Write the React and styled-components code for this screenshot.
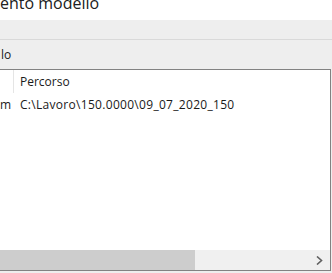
import React from "react";
import styled, { createGlobalStyle } from "styled-components";

const Global = createGlobalStyle`
  html, body { margin: 0; padding: 0; background: #eeeeee; }
  body { font-family: "Open Sans", "Noto Sans", "Liberation Sans", sans-serif; }
`;

const Page = styled.div`
  width: 332px;
  height: 273px;
  display: flex;
  flex-direction: column;
  overflow: hidden;
  background: #eeeeee;
`;

const TitleBar = styled.div`
  height: 20px;
  background: #ffffff;
  overflow: hidden;
  display: flex;
  align-items: flex-end;
`;

const Title = styled.div`
  font-size: 16px;
  line-height: 22px;
  color: #202020;
  margin-bottom: 6px;
  white-space: nowrap;
`;

const Band = styled.div`
  height: ${(p) => p.$h}px;
  background: #eeeeee;
  border-bottom: ${(p) => (p.$line ? "1px solid #d9d9d9" : "none")};
  display: flex;
  align-items: center;
  font-size: 12px;
  color: #1a1a1a;
  padding-left: 1px;
`;

const ListBox = styled.div`
  margin-right: 1px;
  height: 200px;
  background: #ffffff;
  border: 1px solid #828282;
  border-left: none;
  display: flex;
  flex-direction: column;
`;

const HeaderRow = styled.div`
  display: flex;
  height: 23px;
  align-items: stretch;
  font-size: 12px;
  color: #1a1a1a;
`;

const Cell = styled.div`
  width: ${(p) => p.$w}px;
  padding-left: ${(p) => p.$pad}px;
  box-sizing: border-box;
  display: flex;
  align-items: center;
  white-space: nowrap;
  overflow: hidden;
  letter-spacing: ${(p) => p.$ls || 0}px;
  border-right: ${(p) => (p.$sep ? "1px solid #e5e5e5" : "none")};
`;

const Row = styled.div`
  display: flex;
  height: 22px;
  font-size: 12px;
  color: #1a1a1a;
`;

const Rows = styled.div`
  flex: 1;
`;

const HScroll = styled.div`
  height: 20px;
  display: flex;
  background: #f0f0f0;
`;

const Thumb = styled.div`
  width: 195px;
  background: #cdcdcd;
`;

const Track = styled.div`
  flex: 1;
`;

const ArrowBtn = styled.div`
  width: 17px;
  display: flex;
  align-items: center;
  justify-content: center;
  margin-right: 2px;
`;

export default function App() {
  return (
    <Page>
      <Global />
      <TitleBar>
        <Title>ento modello</Title>
      </TitleBar>
      <Band $h={19} $line />
      <Band $h={29}>lo</Band>
      <ListBox>
        <HeaderRow>
          <Cell $w={14} $pad={0} $sep />
          <Cell $w={300} $pad={6}>Percorso</Cell>
        </HeaderRow>
        <Rows>
          <Row>
            <Cell $w={14} $pad={0}>m</Cell>
            <Cell $w={300} $pad={6} $ls={0.3}>C:\Lavoro\150.0000\09_07_2020_150</Cell>
          </Row>
        </Rows>
        <HScroll>
          <Thumb />
          <Track />
          <ArrowBtn>
            <svg width="7" height="9" viewBox="0 0 7 9">
              <path d="M1 0.5 L5.5 4.5 L1 8.5" fill="none" stroke="#606060" strokeWidth="1.6" />
            </svg>
          </ArrowBtn>
        </HScroll>
      </ListBox>
    </Page>
  );
}
